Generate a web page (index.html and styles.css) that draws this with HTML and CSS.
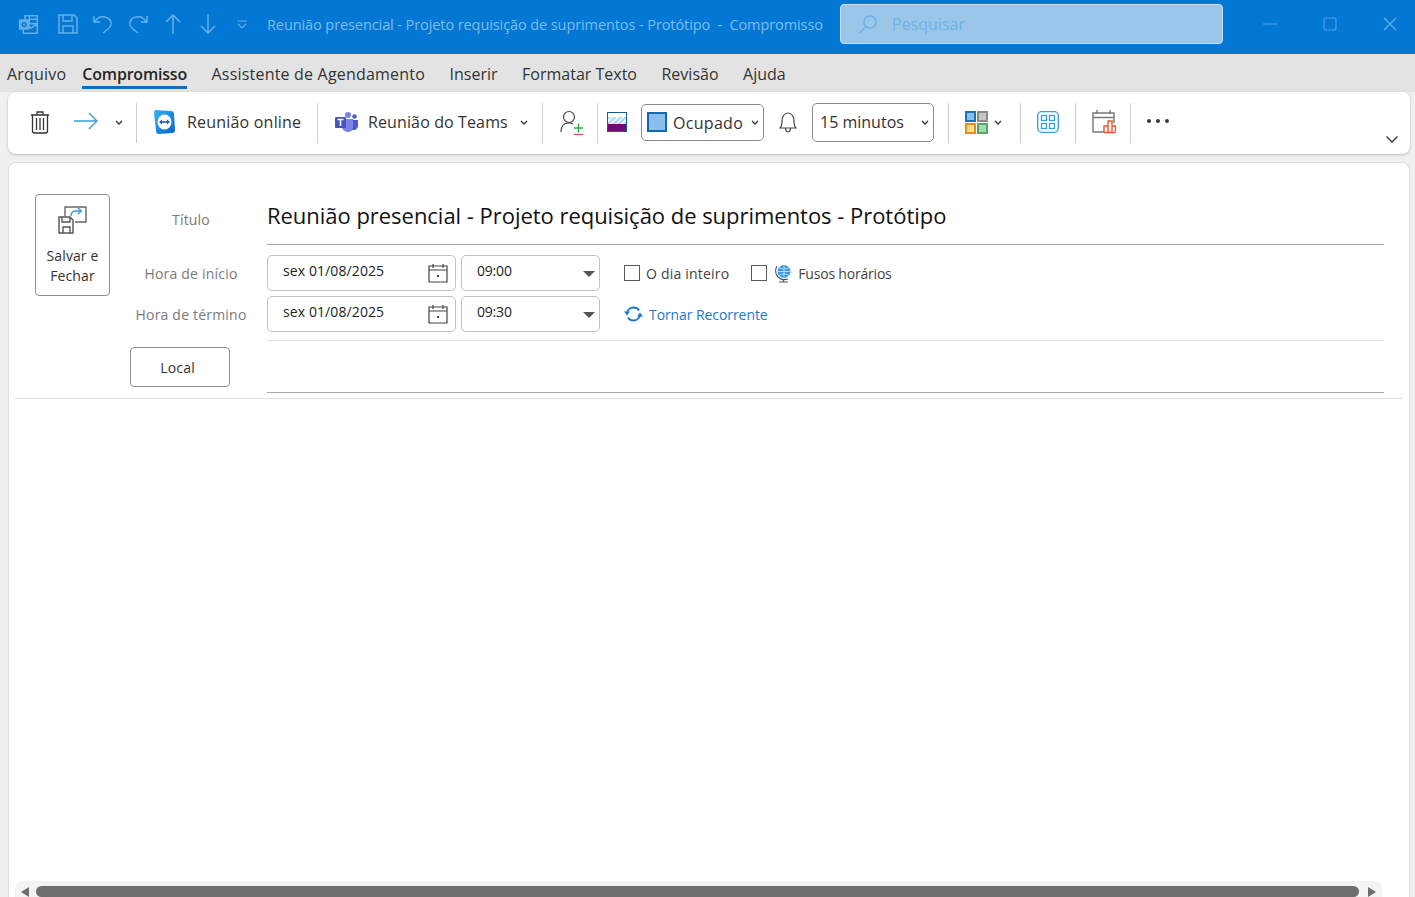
FILE: index.html
```html
<!DOCTYPE html>
<html>
<head>
    <title>Reunião presencial - Compromisso</title>
    <link rel="stylesheet" href="styles.css">
</head>
<body>
    <!-- Title bar -->
    <header class="titlebar">
        <div class="quick-icons">
            <svg class="qa qa-outlook" width="21" height="21" viewBox="0 0 24 24" fill="none" stroke="#66aee6" stroke-width="1.700"><rect x="8" y="2" width="14" height="9"/><path d="M8 11h14v11H6v-4M8 11l7 5 7-5"/><path d="M13 6h9M13 2v9"/><rect x="1" y="6" width="12" height="12" rx="1" fill="#66aee6" stroke="none"/><circle cx="7" cy="12" r="3" fill="#0278d4" stroke="none"/><circle cx="7" cy="12" r="1.300" fill="#66aee6" stroke="none"/></svg>
            <svg class="qa qa-save" width="20" height="20" viewBox="0 0 20 20" fill="none" stroke="#66aee6" stroke-width="1.500"><path d="M1 1h15l3 3v15H1z"/><path d="M5 1v6h9V1M5 19v-7h10v7"/></svg>
            <svg class="qa qa-undo" width="20" height="20" viewBox="0 0 20 20" fill="none" stroke="#66aee6" stroke-width="1.500"><path d="M1 2v6h6M1.500 8C4 4 8 2 12 3c5 1 7 5 6 8-1 2-2 3-3 4l-5 4"/></svg>
            <svg class="qa qa-redo" width="20" height="20" viewBox="0 0 20 20" fill="none" stroke="#66aee6" stroke-width="1.500"><path d="M19 2v6h-6M18.500 8C16 4 12 2 8 3c-5 1-7 5-6 8 1 2 2 3 3 4l5 4"/></svg>
            <svg class="qa qa-up" width="16" height="20" viewBox="0 0 16 20" fill="none" stroke="#66aee6" stroke-width="1.500"><path d="M8 20V1M1 8l7-7 7 7"/></svg>
            <svg class="qa qa-down" width="16" height="20" viewBox="0 0 16 20" fill="none" stroke="#66aee6" stroke-width="1.500"><path d="M8 0v19M1 12l7 7 7-7"/></svg>
            <svg class="qa qa-more" width="10" height="9" viewBox="0 0 10 9" fill="none" stroke="#66aee6" stroke-width="1.200"><path d="M0 1h10M1 4l4 4 4-4"/></svg>
        </div>
        <div class="window-title">Reunião presencial - Projeto requisição de suprimentos - Protótipo&nbsp; - &nbsp;Compromisso</div>
        <div class="search-box">
            <svg width="20" height="20" viewBox="0 0 20 20" fill="none" stroke="#6fb2e8" stroke-width="1.500"><circle cx="12" cy="8" r="6"/><path d="M8 12.500 1.500 19"/></svg>
            <span>Pesquisar</span>
        </div>
        <div class="window-buttons">
            <svg width="14" height="14" viewBox="0 0 14 14" fill="none" stroke="#4ea1e2" stroke-width="1.200"><path d="M0 7h14"/></svg>
            <svg width="14" height="14" viewBox="0 0 14 14" fill="none" stroke="#4ea1e2" stroke-width="1.200"><rect x="1" y="1" width="12" height="12" rx="2"/></svg>
            <svg width="14" height="14" viewBox="0 0 14 14" fill="none" stroke="#66aee6" stroke-width="1.200"><path d="M1 1l12 12M13 1 1 13"/></svg>
        </div>
    </header>

    <!-- Tabs -->
    <nav class="tabs">
        <span class="tab tab-wide">Arquivo</span>
        <span class="tab active">Compromisso</span>
        <span class="tab tab-wide">Assistente de Agendamento</span>
        <span class="tab">Inserir</span>
        <span class="tab">Formatar Texto</span>
        <span class="tab">Revisão</span>
        <span class="tab">Ajuda</span>
    </nav>

    <!-- Ribbon -->
    <section class="ribbon">
        <svg class="r-trash" width="20" height="24" viewBox="0 0 20 24" fill="none" stroke="#333" stroke-width="1.300"><path d="M1 5h18M2.500 5v16c0 1 1 2 2 2h11c1 0 2-1 2-2V5M7 5V2h6v3M6.500 8v12M10 8v12M13.500 8v12"/></svg>
        <svg class="r-arrow" width="24" height="18" viewBox="0 0 24 18" fill="none" stroke="#3b9bdc" stroke-width="1.400"><path d="M0 9h23M15 1l8 8-8 8"/></svg>
        <svg class="chev r-arrow-chev" width="8" height="5" viewBox="0 0 8 5" fill="none" stroke="#333" stroke-width="1.300"><path d="M1 1l3 3 3-3"/></svg>
        <i class="sep sep-first"></i>
        <svg class="r-tv" width="22" height="24" viewBox="0 0 22 24">
            <defs><linearGradient id="tvBlue" x1="0" y1="0" x2="1" y2="1"><stop offset="0" stop-color="#35b4f2"/><stop offset="1" stop-color="#0a62c9"/></linearGradient></defs>
            <path d="M2 0 17 1c2 0 3 1 3 3l1 16c0 2-1 3-3 3L5 24c-2 0-3-1-3-3L0 2C0 1 1 0 2 0z" fill="url(#tvBlue)"/>
            <ellipse cx="10.500" cy="12" rx="7" ry="7.500" fill="#fff"/>
            <path d="M5 12 8 9.500v5zM16 12 13 9.500v5z" fill="#0e62b8"/><path d="M7 11.200h7v1.600H7z" fill="#0e62b8"/>
        </svg>
        <span class="r-label r-online">Reunião online</span>
        <i class="sep"></i>
        <svg class="r-teams" width="23" height="20" viewBox="0 0 23 20"><circle cx="13" cy="3" r="3" fill="#7b83eb"/><circle cx="19.500" cy="4.500" r="2.300" fill="#5059c9"/><path d="M16 8h7v6c0 2-2 4-4 4h-3z" fill="#5059c9"/><path d="M7 7h11v8c0 3-2 5-5 5s-5-2-6-4z" fill="#7b83eb"/><rect x="0" y="5" width="11" height="11" rx="1" fill="#4b53bc"/><path d="M2.500 7.500h6M5.500 7.500v6.500" stroke="#fff" stroke-width="1.500"/></svg>
        <span class="r-label r-teams-label">Reunião do Teams</span>
        <svg class="chev r-teams-chev" width="8" height="5" viewBox="0 0 8 5" fill="none" stroke="#333" stroke-width="1.300"><path d="M1 1l3 3 3-3"/></svg>
        <i class="sep"></i>
        <svg class="r-person" width="25" height="25" viewBox="0 0 25 25" fill="none"><circle cx="9" cy="7" r="5.500" stroke="#444" stroke-width="1.200"/><path d="M1 22c0-6 3-9 8-9 2 0 3 .5 4 1" stroke="#444" stroke-width="1.200"/><path d="M14 18h9M18.500 13.500v9" stroke="#3aa655" stroke-width="1.500"/><path d="M14 24.500h9" stroke="#e0463c" stroke-width="1.300"/></svg>
        <i class="sep sep-tight"></i>
        <div class="r-color"><span class="c-top"></span><span class="c-stripe"></span><span class="c-bottom"></span></div>
        <div class="r-select r-busy">
            <span class="swatch"></span>
            <span class="busy-text">Ocupado</span>
            <svg class="chev" width="8" height="5" viewBox="0 0 8 5" fill="none" stroke="#333" stroke-width="1.300"><path d="M1 1l3 3 3-3"/></svg>
        </div>
        <svg class="r-bell" width="18" height="22" viewBox="0 0 18 22" fill="none" stroke="#444" stroke-width="1.200"><path d="M1 17c2-2 2-4 2-7 0-4 2-8 6-8s6 4 6 8c0 3 0 5 2 7z"/><path d="M6.500 17c0 5 5 5 5 0"/></svg>
        <div class="r-select r-reminder">
            <span>15 minutos</span>
            <svg class="chev" width="8" height="5" viewBox="0 0 8 5" fill="none" stroke="#333" stroke-width="1.300"><path d="M1 1l3 3 3-3"/></svg>
        </div>
        <i class="sep sep-reminder"></i>
        <div class="r-cats"><span class="cat c1"></span><span class="cat c2"></span><span class="cat c3"></span><span class="cat c4"></span></div>
        <svg class="chev r-cats-chev" width="8" height="5" viewBox="0 0 8 5" fill="none" stroke="#333" stroke-width="1.300"><path d="M1 1l3 3 3-3"/></svg>
        <i class="sep"></i>
        <svg class="r-grid" width="22" height="22" viewBox="0 0 22 22" fill="none" stroke="#3b9bdc" stroke-width="1.300"><rect x=".7" y=".7" width="20.600" height="20.600" rx="4"/><rect x="4.500" y="4.500" width="5" height="5"/><rect x="12.500" y="4.500" width="5" height="5"/><rect x="4.500" y="12.500" width="5" height="5"/><rect x="12.500" y="12.500" width="5" height="5"/></svg>
        <i class="sep"></i>
        <svg class="r-insights" width="24" height="24" viewBox="0 0 24 24" fill="none"><path d="M12 22H1V3h21v10M1 7.500h21M5 0v4M18 0v4" stroke="#777" stroke-width="1.400"/><path d="M12 22v-6h4v6M16 22V11h4v11M20 22v-6h3.500v6M12 22.500h11.500" stroke="#e8552a" stroke-width="1.400"/></svg>
        <i class="sep"></i>
        <div class="r-dots"><span></span><span></span><span></span></div>
        <svg class="r-collapse" width="12" height="7" viewBox="0 0 12 7" fill="none" stroke="#333" stroke-width="1.300"><path d="M.5.500 6 6 11.500.500"/></svg>
    </section>

    <!-- Appointment form -->
    <main class="card">
        <form class="form-grid">
            <div class="save-button">
                <svg width="30" height="28" viewBox="0 0 30 28" fill="none"><path d="M7 10V1h21v15H17" stroke="#666" stroke-width="1.400"/><path d="M13 10c0-3 2-5 5-5h5M20 2l3.500 3L20 8" stroke="#3b9bdc" stroke-width="1.400"/><path d="M1 11h11l3 3v13H1z" fill="#fff" stroke="#555" stroke-width="1.400"/><path d="M4 11v5h8v-5M5 27v-6h7v6" stroke="#555" stroke-width="1.400"/></svg>
                <span>Salvar e<br>Fechar</span>
            </div>

            <label class="field-label label-title">Título</label>
            <div class="title-input">Reunião presencial - Projeto requisição de suprimentos - Protótipo</div>

            <div class="labels-time">
                <label class="field-label">Hora de início</label>
                <label class="field-label">Hora de término</label>
            </div>
            <div class="time-rows">
                <div class="time-row">
                    <div class="date-box">
                        <span>sex 01/08/2025</span>
                        <svg width="20" height="20" viewBox="0 0 20 20" fill="none" stroke="#444" stroke-width="1.200"><path d="M1 3h18v16H1zM1 7h18M5 1v4M15 1v4"/><rect x="9" y="12" width="2" height="2" fill="#444" stroke="none"/></svg>
                    </div>
                    <div class="time-box"><span>09:00</span><i class="caret"></i></div>
                    <div class="check-row">
                        <span class="checkbox"></span><span class="check-label label-allday">O dia inteiro</span>
                        <span class="checkbox check-zones"></span>
                        <svg class="globe" width="17" height="19" viewBox="0 0 17 19" fill="none"><circle cx="9" cy="7.500" r="6.500" fill="#3c9be0"/><path d="M2.500 7.500h13M9 1v13M4 3.500c3 2 7 2 10 0M4 11.500c3-2 7-2 10 0" stroke="#cfe6f7" stroke-width=".8"/><path d="M2 2c-2 3-2 8 1 11s7 3 10 2M4 18h9M8.500 15.500V18" stroke="#555" stroke-width="1.100"/></svg>
                        <span class="check-label">Fusos horários</span>
                    </div>
                </div>
                <div class="time-row">
                    <div class="date-box">
                        <span>sex 01/08/2025</span>
                        <svg width="20" height="20" viewBox="0 0 20 20" fill="none" stroke="#444" stroke-width="1.200"><path d="M1 3h18v16H1zM1 7h18M5 1v4M15 1v4"/><rect x="9" y="12" width="2" height="2" fill="#444" stroke="none"/></svg>
                    </div>
                    <div class="time-box"><span>09:30</span><i class="caret"></i></div>
                    <div class="recurrent">
                        <svg width="19" height="16" viewBox="0 0 19 16" fill="none" stroke="#1f78c8" stroke-width="1.800"><path d="M3 7c.5-3 3-5.500 6.500-5.500 2.500 0 4.500 1 5.500 3M16 9c-.5 3-3 5.500-6.500 5.500-2.500 0-4.500-1-5.500-3"/><path d="M0 5.500h6L3 9.500zM13 10.500h6L16 6.500z" fill="#1f78c8" stroke="none"/></svg>
                        <span>Tornar Recorrente</span>
                    </div>
                </div>
            </div>

            <div class="local-button">Local</div>
            <div class="location-input"></div>
        </form>
        <div class="form-rule"></div>
        <div class="body-area"></div>
        <div class="hscroll">
            <i class="arrow-left"></i>
            <div class="hscroll-thumb"></div>
            <i class="arrow-right"></i>
        </div>
    </main>
</body>
</html>
```

FILE: styles.css
```css
* {
    box-sizing: border-box;
}
html, body {
    height: 100%;
    margin: 0;
}
body {
    font-family: "Open Sans", "Noto Sans", Arial, sans-serif;
    background-color: #f0f0f0;
    display: flex;
    flex-direction: column;
    overflow: hidden;
    color: #262626;
}
svg {
    display: block;
    flex: none;
}

/* title bar */
.titlebar {
    height: 54px;
    flex: none;
    background-color: #0278d4;
    display: flex;
    align-items: flex-start;
}
.quick-icons {
    display: flex;
    align-items: center;
    height: 48px;
    width: 267px;
    flex: none;
    padding-left: 18px;
}
.qa-save { margin-left: 19px; }
.qa-undo { margin-left: 15px; }
.qa-redo { margin-left: 15px; }
.qa-up { margin-left: 17px; }
.qa-down { margin-left: 19px; }
.qa-more { margin-left: 21px; }
.window-title {
    width: 573px;
    flex: none;
    line-height: 49px;
    font-size: 14.5px;
    letter-spacing: -0.09px;
    white-space: nowrap;
    color: #7fbcea;
}
.search-box {
    width: 383px;
    height: 40px;
    margin-top: 4px;
    flex: none;
    display: flex;
    align-items: center;
    gap: 14px;
    padding-left: 17px;
    background-color: #99c6e9;
    border: 1px solid #c9e0f2;
    border-radius: 4px;
    color: #6fb2e8;
    font-size: 16px;
}
.window-buttons {
    flex: 1;
    height: 48px;
    display: flex;
    align-items: center;
    justify-content: space-between;
    padding: 0 18px 0 40px;
}

/* tabs */
.tabs {
    height: 38px;
    flex: none;
    background-color: #e3e3e3;
    display: flex;
    padding-left: 7px;
    font-size: 16px;
}
.tab {
    height: 35px;
    line-height: 40px;
    margin-right: 24.5px;
    color: #333;
    white-space: nowrap;
}
.tab-wide { letter-spacing: 0.2px; }
.tab:first-child { margin-right: 16px; }
.tab.active {
    font-weight: 600;
    letter-spacing: -0.2px;
    color: #262626;
    border-bottom: 3px solid #0f6cbd;
}

/* ribbon */
.ribbon {
    height: 62px;
    flex: none;
    margin: 0 5px 0 8px;
    background-color: #fff;
    border-radius: 8px;
    box-shadow: 0 1px 3px rgba(0, 0, 0, 0.22);
    display: flex;
    align-items: center;
    position: relative;
    padding-left: 22px;
    padding-bottom: 2px;
    z-index: 1;
}
.sep {
    width: 1px;
    height: 40px;
    flex: none;
    margin-top: 2px;
    background-color: #cfcfcf;
}
.r-label {
    font-size: 16px;
    white-space: nowrap;
    color: #333;
}
.r-arrow { margin-left: 24px; margin-top: -2px; }
.r-arrow-chev { margin-left: 17px; }
.sep-first { margin-left: 13px; }
.r-tv { margin-left: 17px; }
.r-online { margin-left: 11px; width: 130px; letter-spacing: 0.2px; }
.r-teams { margin-left: 17px; }
.r-teams-label { margin-left: 10px; width: 152px; letter-spacing: 0.12px; }
.r-teams-chev { margin-right: 14px; }
.r-person { margin: 0 12px 0 17px; }
.sep-tight { margin-right: 9px; }
.r-color {
    width: 20px;
    height: 20px;
    flex: none;
    display: flex;
    flex-direction: column;
    border: 1px solid #17589a;
}
.c-top { height: 4px; background-color: #fff; }
.c-stripe { height: 7px; background: repeating-linear-gradient(135deg, #b5d6f2 0 2px, #eaf3fb 2px 4px); }
.c-bottom { flex: 1; background-color: #6e0a78; }
.r-select {
    display: flex;
    align-items: center;
    border: 1px solid #8a8a8a;
    border-radius: 5px;
    font-size: 16px;
    color: #333;
    flex: none;
}
.r-busy {
    width: 123px;
    height: 37px;
    margin-left: 14px;
    padding: 0 4px 0 5px;
    letter-spacing: 0.3px;
}
.r-busy .chev { margin-left: auto; }
.busy-text { padding-top: 2px; }
.swatch {
    width: 20px;
    height: 20px;
    flex: none;
    margin-right: 6px;
    background-color: #8abfec;
    border: 2px solid #1666ac;
}
.r-bell { margin-left: 15px; }
.r-reminder {
    width: 122px;
    height: 39px;
    margin-left: 15px;
    padding: 0 4px 0 7px;
}
.r-reminder .chev { margin-left: auto; }
.sep-reminder { margin-left: 14px; }
.r-cats {
    margin-left: 16px;
    display: grid;
    grid-template-columns: 11px 11px;
    gap: 1px;
    flex: none;
}
.cat { height: 11px; border: 2px solid; }
.c1 { background-color: #88bfec; border-color: #1b73c0; }
.c2 { background-color: #c9c7c3; border-color: #8d8b88; }
.c3 { background-color: #fbdc8f; border-color: #ee8a1c; }
.c4 { background-color: #a2dca8; border-color: #57a56c; }
.r-cats-chev { margin: 0 18px 0 6px; }
.r-grid { margin: 0 16px; }
.r-insights { margin: 0 14px 0 16px; }
.r-dots {
    margin-left: 16px;
    display: flex;
    gap: 5px;
    margin-top: -3px;
}
.r-dots span {
    width: 4px;
    height: 4px;
    border-radius: 50%;
    background-color: #3a3a3a;
}
.r-collapse {
    position: absolute;
    right: 12px;
    bottom: 11px;
}

/* form card */
.card {
    flex: 1;
    min-height: 0;
    margin: 8px 5px 0 8px;
    background-color: #fff;
    border: 1px solid #e0e0e0;
    border-bottom: none;
    border-radius: 8px 8px 0 0;
    display: flex;
    flex-direction: column;
}
.form-grid {
    display: grid;
    grid-template-columns: 95px 122px 15px 1117px;
    grid-template-rows: 51px 96px 52px;
    padding: 31px 0 0 26px;
    flex: none;
}
.save-button {
    grid-row: 1 / 3;
    grid-column: 1;
    width: 75px;
    height: 102px;
    border: 1px solid #8f8f8f;
    border-radius: 4px;
    display: flex;
    flex-direction: column;
    align-items: center;
    padding-top: 11px;
    font-size: 14px;
    line-height: 20px;
    letter-spacing: 0.1px;
    text-align: center;
    color: #333;
}
.save-button span { margin-top: 12px; }
.field-label {
    display: block;
    font-size: 14px;
    letter-spacing: 0.2px;
    color: #7a7a7a;
    text-align: center;
    white-space: nowrap;
}
.label-title {
    grid-column: 2;
    grid-row: 1;
    line-height: 51px;
}
.title-input {
    grid-column: 4;
    grid-row: 1;
    height: 51px;
    border-bottom: 1px solid #a6a6a6;
    font-size: 22px;
    line-height: 43px;
    letter-spacing: -0.03px;
    color: #111;
    white-space: nowrap;
}
.labels-time {
    grid-column: 2;
    grid-row: 2;
    padding-top: 19px;
    display: flex;
    flex-direction: column;
    gap: 22px;
    line-height: 19px;
}
.time-rows {
    grid-column: 4;
    grid-row: 2;
    height: 96px;
    padding-top: 10px;
    display: flex;
    flex-direction: column;
    gap: 5px;
    border-bottom: 1px solid #e1e1e1;
}
.time-row {
    display: flex;
    height: 36px;
    gap: 5px;
    align-items: stretch;
}
.date-box, .time-box {
    border: 1px solid #c1c1c1;
    border-radius: 5px;
    display: flex;
    align-items: center;
    font-size: 14px;
    color: #222;
    line-height: 30px;
    padding-bottom: 5px;
}
.date-box {
    width: 189px;
    padding-left: 15px;
    justify-content: space-between;
    padding-right: 7px;
    letter-spacing: 0.1px;
}
.date-box svg { margin-top: 4px; }
.time-box {
    width: 139px;
    padding-left: 15px;
    padding-right: 4px;
    justify-content: space-between;
    letter-spacing: -0.2px;
}
.caret {
    width: 0;
    height: 0;
    border-left: 6px solid transparent;
    border-right: 6px solid transparent;
    border-top: 6px solid #555;
    margin-top: 6px;
}
.check-row {
    display: flex;
    align-items: center;
    margin-left: 19px;
    font-size: 14px;
    letter-spacing: -0.2px;
    color: #444;
}
.checkbox {
    width: 16px;
    height: 16px;
    border: 1px solid #5a5a5a;
    margin-right: 6px;
}
.check-label { white-space: nowrap; }
.label-allday { letter-spacing: 0.2px; }
.check-zones { margin-left: 22px; margin-right: 8px; }
.globe { margin-right: 6px; }
.recurrent {
    display: flex;
    align-items: center;
    gap: 6px;
    margin-left: 19px;
    font-size: 14px;
    letter-spacing: -0.08px;
    color: #1f78c8;
}
.local-button {
    grid-column: 2 / 4;
    grid-row: 3;
    width: 100px;
    height: 40px;
    margin-top: 6px;
    border: 1px solid #8f8f8f;
    border-radius: 4px;
    text-align: center;
    line-height: 39px;
    font-size: 14px;
    letter-spacing: 0.2px;
    padding-right: 5px;
    color: #333;
}
.location-input {
    grid-column: 4;
    grid-row: 3;
    height: 52px;
    border-bottom: 1px solid #a6a6a6;
}
.form-rule {
    height: 1px;
    flex: none;
    margin: 5px 6px 0 6px;
    background-color: #e1e1e1;
}
.body-area {
    flex: 1;
    min-height: 0;
}

/* horizontal scrollbar */
.hscroll {
    height: 16px;
    flex: none;
    margin: 0 27px 0 6px;
    background-color: #f3f3f3;
    border-radius: 8px 8px 0 0;
    display: flex;
    align-items: flex-end;
    padding: 0 6px;
}
.hscroll-thumb {
    flex: 1;
    height: 11px;
    margin: 0 9px 0 7px;
    background-color: #6e6e6e;
    border-radius: 6px;
}
.arrow-left, .arrow-right {
    width: 0;
    height: 0;
    border-top: 5px solid transparent;
    border-bottom: 5px solid transparent;
}
.arrow-left { border-right: 8px solid #6e6e6e; }
.arrow-right { border-left: 8px solid #6e6e6e; }
```
